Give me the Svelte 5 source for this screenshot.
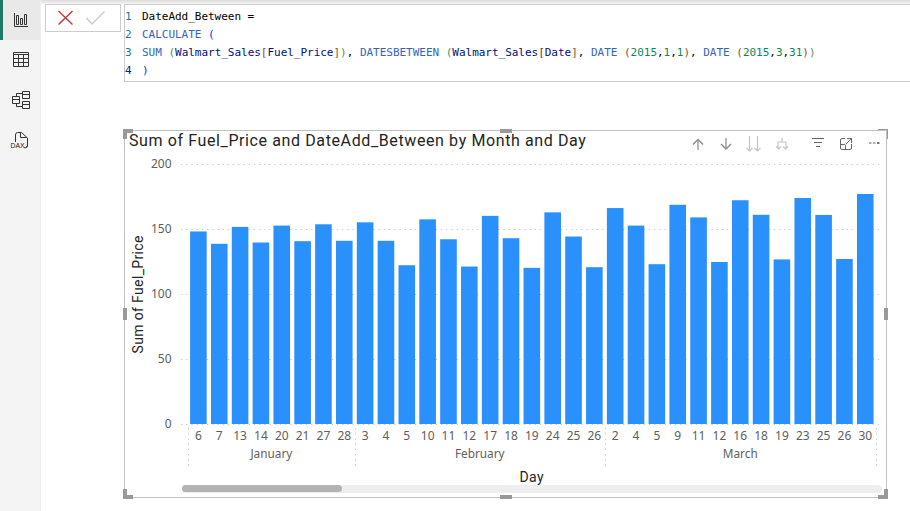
<script>
	const months = [
		{
			name: 'January',
			days: [
				[6, 148.5], [7, 139], [13, 152], [14, 140], [20, 153], [21, 141], [27, 154], [28, 141.3]
			]
		},
		{
			name: 'February',
			days: [
				[3, 155.5], [4, 141.3], [5, 122.5], [10, 157.8], [11, 142.5], [12, 121.5], [17, 160.5],
				[18, 143.3], [19, 120.5], [24, 163.2], [25, 144.6], [26, 121]
			]
		},
		{
			name: 'March',
			days: [
				[2, 166.5], [4, 153], [5, 123.3], [9, 169], [11, 159.3], [12, 125], [16, 172.5],
				[18, 161.3], [19, 127], [23, 174.2], [25, 161.2], [26, 127.3], [30, 177.3]
			]
		}
	];

	const ticks = [200, 150, 100, 50, 0];
	const left = 63;
	const band = 20.84;
	const y = (value) => 270.5 - value * 1.3;

	let bars = [];
	let groups = [];
	for (const month of months) {
		const start = left + bars.length * band;
		for (const [day, value] of month.days) {
			bars.push({ day, value, x: left + bars.length * band });
		}
		const end = left + bars.length * band;
		groups.push({ name: month.name, end: Math.round(end) + 0.5, mid: (start + end) / 2 });
	}
</script>

<div class="app">
	<nav class="sidebar">
		<button class="nav-item active" aria-label="Report view">
			<svg width="40" height="40" viewBox="0 0 40 40">
				<path d="M14.5 13v13.5H28" />
				<path d="M16.5 15.5h2v9h-2zM20.5 18.5h2v6h-2zM24.5 14.5h2v10h-2z" />
			</svg>
		</button>
		<button class="nav-item" aria-label="Table view">
			<svg width="40" height="40" viewBox="0 0 40 40">
				<path d="M13.5 12.5h15v14h-15zM13.5 14.5h15M13.5 18.5h15M13.5 22.5h15M18.5 14.5v12M23.5 14.5v12" />
			</svg>
		</button>
		<button class="nav-item" aria-label="Model view">
			<svg width="40" height="40" viewBox="0 0 40 40">
				<path d="M12.5 16.5h7v7h-7zM12.5 19.5h7M22.5 11.5h7v7h-7zM22.5 14.5h7M22.5 21.5h7v7h-7zM22.5 24.5h7" />
				<path d="M16.5 16.5v-3h6M16.5 23.5v3h6" />
			</svg>
		</button>
		<button class="nav-item" aria-label="DAX query view">
			<svg width="40" height="40" viewBox="0 0 40 40">
				<path d="M15.5 22v-7q0-2.5 2-2.5h4l6 5.500V26q0 1-1.500 1.500M20.500 12.500v5h6" />
				<text x="10.5" y="28" textLength="14" lengthAdjust="spacingAndGlyphs">DAX</text>
				<path d="M24 27.5l1.500 .5 1.500-2" />
			</svg>
		</button>
	</nav>

	<main>
		<div class="top-shadow"></div>
		<div class="formula-bar">
			<div class="actions">
				<svg width="74" height="26" viewBox="0 0 74 26">
					<path class="cancel" d="M12.5 6l14 13.500M26.500 6l-14 13.500" />
					<path class="commit" d="M40.5 13l5.500 6L58.500 6.500" />
				</svg>
			</div>
			<div class="editor">
				<div class="line"><i>1</i>DateAdd_Between =</div>
				<div class="line"><i>2</i><b>CALCULATE</b> <b class="paren">(</b></div>
				<div class="line"><i>3</i><b>SUM</b> <span class="p1">(</span><span class="ref">Walmart_Sales</span><span class="p2">[</span><span class="ref">Fuel_Price</span><span class="p2">]</span><span class="p1">)</span>, <b>DATESBETWEEN</b> <span class="p1">(</span><span class="ref">Walmart_Sales</span><span class="p3">[</span><span class="ref">Date</span><span class="p2">]</span>, <b>DATE</b> <span class="p2">(</span><u>2015</u>,<u>1</u>,<u>1</u><span class="p2">)</span>, <b>DATE</b> <span class="p2">(</span><u>2015</u>,<u>3</u>,<u>31</u><span class="p2">)</span><span class="p1">)</span></div>
				<div class="line"><i class="current">4</i><b class="paren">)</b></div>
			</div>
		</div>

		<section class="visual">
			<header>
				<h1>Sum of Fuel_Price and DateAdd_Between by Month and Day</h1>
				<svg class="tools" width="200" height="24" viewBox="0 0 200 24">
					<g class="mid">
						<path class="stem" d="M18 18V8M46 6v11" />
						<path d="M13 12.5l5-5 5 5M41 12l5 5 5-5" />
					</g>
					<g class="light">
						<path d="M69.5 4v15M77.5 4v15M66.5 16l3 3 3-3M74.500 16l3 3 3-3" />
						<path d="M102 6v4M98 17v-7h8v7M96 14.500l2.500 2.500 2.500-2.500M103 14.500l2.500 2.500 2.500-2.500" />
					</g>
					<g class="dark">
						<path d="M132 6.5h12M134 10.5h8M136 14.5h4" />
						<path d="M165 6.5h-3q-1.500 0-1.500 1.500v8q0 1.500 1.500 1.500h8q1.500 0 1.500-1.500v-4M160.500 12.500h4q1 0 1 1v4M166 12l5.500-5.500M167 6.500h4.500V11" />
					</g>
					<path class="dots" d="M189 10h2.500v2h-2.500zM193 10h2.500v2h-2.500z" />
					<path class="dot-dark" d="M197 10h2.500v2h-2.500z" />
				</svg>
			</header>

			<svg class="chart" width="761" height="335" viewBox="0 0 761 335">
				{#each ticks as tick}
					<line class="grid" x1="56" x2="757" y1={y(tick)} y2={y(tick)} />
					<text class="tick" x="46.5" y={y(tick) + 3.5} text-anchor="end">{tick}</text>
				{/each}
				{#each bars as bar}
					<rect class="bar" x={bar.x + 2.1} y={y(bar.value)} width="16.6" height={bar.value * 1.3 - 0.5} />
					<text class="tick" x={bar.x + 10.4} y="286" text-anchor="middle">{bar.day}</text>
				{/each}
				<line class="split" x1="63.5" x2="63.5" y1="274" y2="312" />
				{#each groups as group}
					<line class="split" x1={group.end} x2={group.end} y1="274" y2="312" />
					<text class="tick month" x={group.mid} y="304" text-anchor="middle">{group.name}</text>
				{/each}
				<text class="axis" transform="translate(18 199.5) rotate(-90)" textLength="118">Sum of Fuel_Price</text>
				<text class="axis" x="394.5" y="328" textLength="24">Day</text>
			</svg>

			<div class="scrollbar"><div class="thumb"></div></div>

			<span class="handle corner tl"></span>
			<span class="handle corner tr"></span>
			<span class="handle corner bl"></span>
			<span class="handle corner br"></span>
			<span class="handle top"></span>
			<span class="handle bottom"></span>
			<span class="handle left"></span>
			<span class="handle right"></span>
		</section>
	</main>
</div>

<style>
	:global(body) {
		overflow: hidden;
		background: #fff;
	}
	.app {
		display: flex;
		width: 910px;
		height: 511px;
		overflow: hidden;
		font-family: 'Noto Sans', 'Open Sans', sans-serif;
	}
	.sidebar {
		box-sizing: border-box;
		width: 41px;
		flex-shrink: 0;
		background: #f4f4f4;
		border-right: 1px solid #eee;
	}
	.nav-item {
		display: block;
		width: 40px;
		height: 40px;
		padding: 0;
		border: none;
		background: none;
	}
	.nav-item.active {
		background: #e9e9e9;
		box-shadow: inset 3px 0 #217868;
	}
	.nav-item svg {
		display: block;
		fill: none;
		stroke: #333;
	}
	.nav-item text {
		font: 7.5px 'Liberation Sans', sans-serif;
		fill: #222;
		stroke: #f4f4f4;
		stroke-width: 1.5px;
		paint-order: stroke;
	}
	main {
		width: 869px;
		flex-shrink: 0;
	}
	.top-shadow {
		height: 4px;
		background: linear-gradient(#dcdcdc, #f5f5f5);
	}
	.formula-bar {
		display: flex;
		align-items: flex-start;
		gap: 3px;
		padding-left: 4px;
	}
	.actions {
		height: 26px;
		border: 1px solid #ccc;
	}
	.actions svg {
		display: block;
		fill: none;
		stroke-width: 1.4px;
	}
	.cancel {
		stroke: #c4373b;
	}
	.commit {
		stroke: #c8c8c8;
	}
	.editor {
		box-sizing: border-box;
		flex: 1;
		height: 78px;
		padding-top: 3px;
		border: 1px solid #ccc;
		border-right: none;
		font: 11px/18px 'DejaVu Sans Mono', monospace;
		letter-spacing: -0.022px;
		color: #000;
	}
	.line {
		height: 18px;
		white-space: pre;
	}
	.line i {
		display: inline-block;
		width: 17px;
		font-style: normal;
		color: #237893;
	}
	.line i.current {
		color: #0b216f;
	}
	.line b {
		font-weight: normal;
		color: #3165bb;
	}
	.line b.paren {
		color: #0431fa;
	}
	.line u {
		text-decoration: none;
		color: #098658;
	}
	.ref {
		color: #001080;
	}
	.p1 {
		color: #5b8c50;
	}
	.p2 {
		color: #7b5426;
	}
	.p3 {
		color: #a31515;
	}
	.visual {
		position: relative;
		box-sizing: border-box;
		width: 763px;
		height: 368px;
		margin: 48px 0 0 83px;
		border: 1px solid #c1c1c1;
	}
	header {
		display: flex;
		justify-content: space-between;
		height: 23px;
		padding-left: 4px;
		padding-right: 6px;
	}
	h1 {
		margin: 0;
		font: 16px/20px Roboto, sans-serif;
		letter-spacing: 0.61px;
		color: #252423;
		white-space: nowrap;
	}
	.tools {
		flex-shrink: 0;
		fill: none;
		margin-top: 1px;
	}
	.mid {
		stroke: #8a8a8a;
		stroke-width: 1.4px;
	}
	.stem {
		stroke: #b8b8b8;
		stroke-width: 2px;
	}
	.light {
		stroke: #c4c4c4;
		stroke-width: 1.2px;
	}
	.dark {
		stroke: #666;
	}
	.dots {
		fill: #b0b0b0;
	}
	.dot-dark {
		fill: #777;
	}
	.chart {
		display: block;
	}
	.grid,
	.split {
		stroke: #c8c8c8;
		stroke-dasharray: 1.3 3.9;
	}
	.bar {
		fill: #2a90fc;
	}
	.tick {
		font-size: 12px;
		fill: #605e5c;
	}
	.month {
		font-size: 11.8px;
	}
	.axis {
		font: 14px Roboto, sans-serif;
		fill: #252423;
	}
	.scrollbar {
		width: 700px;
		height: 8px;
		margin: -4px 0 0 57px;
		border-radius: 4px;
		background: #eee;
	}
	.thumb {
		width: 160px;
		height: 7px;
		border-radius: 4px;
		background: #b3b3b3;
	}
	.handle {
		position: absolute;
		box-sizing: border-box;
		background: #999;
	}
	.corner {
		width: 10px;
		height: 10px;
		border: 0 solid #999;
		background: none;
	}
	.tl {
		top: -2px;
		left: -2px;
		border-width: 4px 0 0 4px;
	}
	.tr {
		top: -2px;
		right: -2px;
		border-width: 1px 1px 0 0;
	}
	.bl {
		bottom: -2px;
		left: -2px;
		border-width: 0 0 4px 4px;
	}
	.br {
		bottom: -2px;
		right: -2px;
		border-width: 0 4px 4px 0;
	}
	.top,
	.bottom {
		left: 375px;
		width: 12px;
		height: 4px;
	}
	.top {
		top: -2px;
	}
	.bottom {
		bottom: -2px;
	}
	.left,
	.right {
		top: 177px;
		width: 4px;
		height: 12px;
	}
	.left {
		left: -2px;
	}
	.right {
		right: -2px;
	}
</style>
